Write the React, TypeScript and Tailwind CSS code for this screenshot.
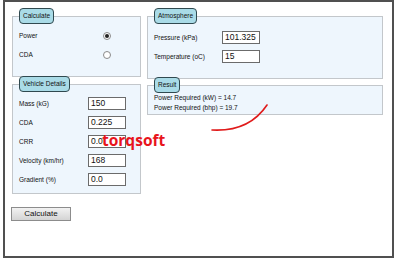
import React from "react";

const Legend = ({ children }: { children: React.ReactNode }) => (
  <legend className="h-[16px] px-[3px] rounded-[4px] border border-[#30494f] bg-[#a9dbe7] text-[6.5px] leading-[14px] text-[#111]">
    {children}
  </legend>
);

const Field = ({ value }: { value: string }) => (
  <div className="w-[38px] h-[13px] border border-[#6b6b6b] bg-white pl-[2px] text-[8.5px] leading-[11px] text-[#111]">
    {value}
  </div>
);

const Radio = ({ checked }: { checked?: boolean }) => (
  <span className="flex items-center justify-center w-[8px] h-[8px] rounded-full border border-[#8a8a8a] bg-white">
    {checked && <span className="w-[4px] h-[4px] rounded-full bg-[#222]" />}
  </span>
);

const vehicle = [
  { label: "Mass (kG)", value: "150" },
  { label: "CDA", value: "0.225" },
  { label: "CRR", value: "0.0" },
  { label: "Velocity (km/hr)", value: "168" },
  { label: "Gradient (%)", value: "0.0" },
];

export default function App() {
  return (
    <div className="w-[396px] h-[260px] bg-white font-['Liberation_Sans',Arial,sans-serif] text-[#111]">
      <div className="ml-[3px] w-[391px] h-[258px] border-2 border-[#505050]">
        <div className="pt-[6px] pl-[7px] flex gap-[6px]">
          {/* left column */}
          <div className="w-[129px] flex flex-col">
            <fieldset className="border border-[#c3c7cb] bg-[#eef6fd] px-[6px] pt-[2px] pb-[12px]">
              <Legend>Calculate</Legend>
              <div className="flex items-center h-[19px] text-[6.5px]">
                <span className="w-[84px]">Power</span>
                <Radio checked />
              </div>
              <div className="flex items-center h-[19px] text-[6.5px]">
                <span className="w-[84px]">CDA</span>
                <Radio />
              </div>
            </fieldset>

            <fieldset className="-mt-[1px] border border-[#c3c7cb] bg-[#eef6fd] px-[6px] pt-[2px] pb-[4px]">
              <Legend>Vehicle Details</Legend>
              {vehicle.map((v) => (
                <div key={v.label} className="flex items-center h-[19px] text-[6.5px]">
                  <span className="w-[69px]">{v.label}</span>
                  {v.label === "CRR" ? (
                    <div className="flex items-center">
                      <Field value={v.value} />
                    </div>
                  ) : (
                    <Field value={v.value} />
                  )}
                </div>
              ))}
            </fieldset>

            <button className="mt-[13px] -ml-[1px] w-[60px] h-[14px] border border-[#8c8c8c] bg-gradient-to-b from-[#f2f2f2] to-[#d4d4d4] text-[8px] leading-[12px] text-[#111]">
              Calculate
            </button>
          </div>

          {/* right column */}
          <div className="w-[236px] flex flex-col">
            <fieldset className="border border-[#c3c7cb] bg-[#eef6fd] px-[6px] pt-[4px] pb-[12px]">
              <Legend>Atmosphere</Legend>
              <div className="flex items-center h-[19px] text-[6.5px]">
                <span className="w-[68px]">Pressure (kPa)</span>
                <Field value="101.325" />
              </div>
              <div className="flex items-center h-[19px] text-[6.5px]">
                <span className="w-[68px]">Temperature (oC)</span>
                <Field value="15" />
              </div>
            </fieldset>

            <fieldset className="-mt-[2px] border border-[#c3c7cb] bg-[#eef6fd] px-[6px] pt-0 pb-[1px]">
              <Legend>Result</Legend>
              <div className="text-[6.5px] leading-[10px]">Power Required (kW) = 14.7</div>
              <div className="text-[6.5px] leading-[10px]">Power Required (bhp) = 19.7</div>
            </fieldset>

            {/* watermark */}
            <div className="relative">
              <svg className="absolute left-[62px] -top-[11px]" width="60" height="30" viewBox="0 0 60 30">
                <path d="M58 1 Q40 28 3 26" fill="none" stroke="#e01b1b" strokeWidth="1.6" strokeLinecap="round" />
              </svg>
              <span className="absolute -left-[45px] top-[16px] font-['Open_Sans',sans-serif] font-bold text-[15.5px] leading-[18px] text-[#e8141c]">
                torqsoft
              </span>
            </div>
          </div>
        </div>
      </div>
    </div>
  );
}
